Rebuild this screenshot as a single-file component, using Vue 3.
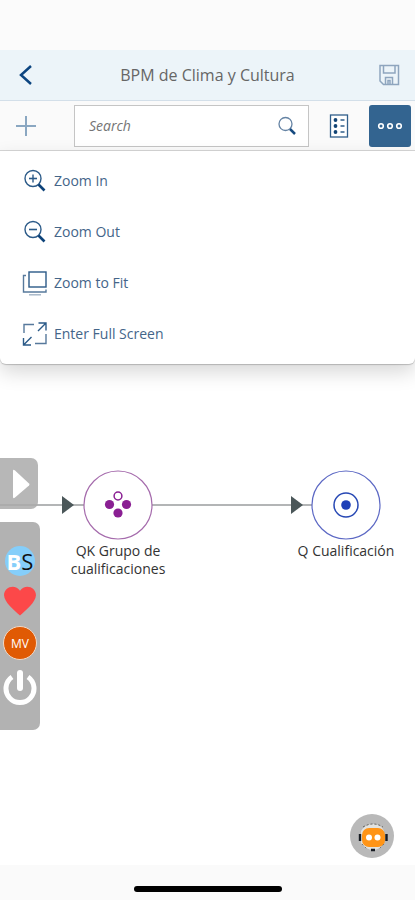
<script setup>
import { ref } from 'vue'

const query = ref('')
const actions = [
  { id: 'in', label: 'Zoom In' },
  { id: 'out', label: 'Zoom Out' },
  { id: 'fit', label: 'Zoom to Fit' },
  { id: 'full', label: 'Enter Full Screen' },
]
</script>

<template>
  <div class="screen">
    <div class="status"></div>
    <header class="titlebar">
      <button class="icon-btn" aria-label="Back">
        <svg width="24" height="24" viewBox="0 0 24 24"><path d="M17 3 7 12l10 9" fill="none" stroke="#0c4580" stroke-width="2.5" /></svg>
      </button>
      <h1>BPM de Clima y Cultura</h1>
      <button class="icon-btn" aria-label="Save">
        <svg width="24" height="24" viewBox="0 0 24 24" fill="none" stroke="#8ea5be" stroke-width="1.5"><path d="M3 2.500h18.500v19H6.500L3 18zM6.500 2.500v7.500h11.500V2.500M8.500 21.500v-7h7v7M11 21v-3.500h2V21" /></svg>
      </button>
    </header>
    <div class="toolbar">
      <button class="icon-btn" aria-label="Add">
        <svg width="24" height="24" viewBox="0 0 24 24"><path d="M12 2v20M2 12h20" stroke="#8aa7c1" stroke-width="2" /></svg>
      </button>
      <div class="search">
        <input v-model="query" type="text" placeholder="Search" aria-label="Search" />
        <button class="find" aria-label="Find">
          <svg width="20" height="20" viewBox="0 0 20 20" fill="none"><circle cx="8.500" cy="8" r="6.500" stroke="#6583a4" stroke-width="1.300" /><path d="m13 13 5 5" stroke="#174b80" stroke-width="2.500" /></svg>
        </button>
      </div>
      <button class="icon-btn" aria-label="Legend">
        <svg width="20" height="26" viewBox="0 0 20 26"><rect x="1.500" y="2" width="17" height="22" fill="#fff" stroke="#315f8b" stroke-width="1.300" /><g fill="#124475"><circle cx="6.500" cy="7" r="1.900" /><circle cx="6.500" cy="13" r="1.900" /><circle cx="6.500" cy="19" r="1.900" /></g><path d="M11.500 7h4M11.500 13h4M11.500 19h4" stroke="#315f8b" stroke-width="1.500" /></svg>
      </button>
      <button class="more" aria-label="More" aria-expanded="true">
        <svg width="26" height="10" viewBox="0 0 26 10" fill="none" stroke="#fff" stroke-width="1.600"><circle cx="4" cy="5" r="2.300" /><circle cx="13" cy="5" r="2.300" /><circle cx="22" cy="5" r="2.300" /></svg>
      </button>
    </div>

    <main class="canvas">
      <ul class="menu">
        <li v-for="a in actions" :key="a.id">
          <button class="action">
            <svg width="26" height="26" viewBox="0 0 26 26" fill="none" stroke="#2b5a88" stroke-width="1.400">
              <template v-if="a.id === 'in' || a.id === 'out'">
                <circle cx="11" cy="10.500" r="8" />
                <path d="M7 10.500h8" stroke-width="1.600" />
                <path v-if="a.id === 'in'" d="M11 6.500v8" />
                <path d="m16.500 16.500 6 6" stroke="#0d4279" stroke-width="2.600" />
              </template>
              <template v-else-if="a.id === 'fit'">
                <rect x="7" y="2" width="17" height="15" />
                <path d="M4 5.500H1.500V22H24v-2.500" stroke="#57799c" />
                <path d="M7 24.800h12" stroke="#a3b4c6" />
              </template>
              <template v-else>
                <path d="M2 12V3.500h10M24 13v9.500H13" stroke="#57799c" />
                <path d="m16 10 8-8M16.500 2H24v7.500M9.500 16l-8 8M1.500 17v7H9" />
              </template>
            </svg>
            <span>{{ a.label }}</span>
          </button>
        </li>
      </ul>

      <div class="edge incoming"></div>
      <div class="edge link"></div>

      <div class="node group">
        <svg width="70" height="70" viewBox="0 0 70 70">
          <circle cx="35" cy="35" r="34" fill="#fff" stroke="#a56bac" stroke-width="1.200" />
          <g fill="#8a1f93"><circle cx="26.500" cy="34.500" r="4.600" /><circle cx="43.500" cy="34.500" r="4.600" /><circle cx="35" cy="43" r="4.600" /></g>
          <circle cx="35" cy="26" r="3.900" fill="#fff" stroke="#8a1f93" stroke-width="1.500" />
        </svg>
        <span>QK Grupo de cualificaciones</span>
      </div>
      <div class="node single">
        <svg width="70" height="70" viewBox="0 0 70 70">
          <circle cx="35" cy="35" r="34" fill="#fff" stroke="#5c68c4" stroke-width="1.200" />
          <circle cx="35" cy="35" r="12" fill="none" stroke="#2748b4" stroke-width="1.500" />
          <circle cx="35" cy="35" r="4.800" fill="#1e40b8" />
        </svg>
        <span>Q Cualificación</span>
      </div>

      <button class="play" aria-label="Play">
        <svg width="20" height="32" viewBox="0 0 20 32"><path d="M2 3v26q0 2 2 .5L18 17.500q1-1 0-2L4 2.500Q2 1 2 3z" fill="#fff" /></svg>
      </button>
      <nav class="dock" aria-label="Shortcuts">
        <button class="bs"><b>B</b><i>S</i></button>
        <button aria-label="Favorite">
          <svg width="34" height="30" viewBox="0 0 34 31"><path d="M17 30.500C10 24 1 17 .500 9.500.500 1 12-2.500 17 5 22-2.500 33.500 1 33.500 9.500 33 17 24 24 17 30.500z" fill="#fc4849" /></svg>
        </button>
        <button class="mv">MV</button>
        <button class="power" aria-label="Power">
          <svg width="34" height="36" viewBox="0 0 34 36" fill="none" stroke="#fff" stroke-width="5"><path d="M9 7A14 14 0 1 0 25 7" /><path d="M17 3v15" stroke-width="6" stroke-linecap="round" /></svg>
        </button>
      </nav>

      <button class="bot" aria-label="Assistant">
        <svg width="44" height="44" viewBox="0 0 44 44">
          <circle cx="22" cy="22" r="22" fill="#b9b9b9" />
          <path d="M11 17q4-7 12-7t11 7v12q-4 7-11 7t-12-7z" fill="#e2e2df" />
          <path d="M13 13q10-6 20 0" fill="none" stroke="#5b5b57" stroke-dasharray="2 2" />
          <rect x="12" y="14" width="23" height="19" rx="7" fill="#ff9416" />
          <circle cx="19" cy="23.500" r="3" fill="#fff" /><circle cx="27.500" cy="23.500" r="3" fill="#fff" />
          <path d="M10 20v7M36.500 20v7M21 36h4" stroke="#161b22" stroke-width="2.400" />
          <path d="m12 30 5 5M34 30l-5 5" stroke="#777" stroke-dasharray="2 2" />
        </svg>
      </button>
    </main>
    <footer class="home"><div class="pill"></div></footer>
  </div>
</template>

<style>
body { margin: 0; background: #fff; }
</style>

<style scoped>
.screen {
  min-height: 100vh;
  display: flex;
  flex-direction: column;
  overflow: hidden;
  font-family: "Open Sans", "Noto Sans", sans-serif;
  color: #333;
}
button {
  border: 0;
  padding: 0;
  background: none;
  font: inherit;
  cursor: pointer;
}
svg { display: block; flex: none; }
.status { height: 50px; background: #fbfbfb; }
.titlebar, .toolbar {
  display: flex;
  align-items: center;
  box-sizing: border-box;
}
.titlebar {
  height: 51px;
  justify-content: space-between;
  background: #ecf4f9;
  border-bottom: 1px solid #d3dfe9;
}
h1 {
  margin: 0;
  font-size: 16px;
  font-weight: 400;
  color: #666;
}
.icon-btn {
  width: 52px;
  height: 44px;
  display: grid;
  place-items: center;
  flex: none;
}
.toolbar {
  height: 50px;
  padding-right: 4px;
  background: #fafafa;
  border-bottom: 1px solid #d6d6d6;
}
.search {
  flex: 1;
  min-width: 0;
  height: 42px;
  margin-left: 22px;
  margin-right: 4px;
  box-sizing: border-box;
  display: flex;
  align-items: center;
  border: 1px solid #c5c5c5;
  background: #fff;
}
.search input {
  flex: 1;
  min-width: 0;
  border: 0;
  outline: 0;
  padding: 0 14px;
  background: none;
  font: 14px "Open Sans", "Noto Sans", sans-serif;
  color: #333;
}
.search input::placeholder { color: #747474; font-style: italic; opacity: 1; }
.find { padding: 0 11px; }
.more {
  width: 42px;
  height: 42px;
  margin-left: 4px;
  display: grid;
  place-items: center;
  flex: none;
  border-radius: 3px;
  background: #336490;
}
.canvas { position: relative; flex: 1; min-height: 660px; background: #fff; }
.menu {
  position: absolute;
  top: 0;
  left: 0;
  right: 0;
  margin: 0;
  padding: 4px 0 5px;
  list-style: none;
  background: #fff;
  border-radius: 0 0 6px 6px;
  box-shadow: 0 1px 1px rgba(0, 0, 0, 0.2), 0 8px 20px rgba(0, 0, 0, 0.16);
}
.action {
  width: 100%;
  height: 51px;
  padding: 0 22px;
  display: flex;
  align-items: center;
  gap: 6px;
  font-size: 14px;
  color: #446589;
}
.edge {
  position: absolute;
  top: 353px;
  height: 2px;
  background: #b3b5b6;
}
.edge::after {
  content: "";
  position: absolute;
  right: 10px;
  top: -8px;
  border: solid transparent;
  border-width: 9px 0 9px 12px;
  border-left-color: #4b5759;
}
.incoming { left: 0; width: 84px; }
.link { left: 152px; width: 161px; }
.node {
  position: absolute;
  top: 319px;
  width: 120px;
  display: flex;
  flex-direction: column;
  align-items: center;
  gap: 2px;
  font-size: 14px;
  line-height: 18px;
  text-align: center;
}
.group { left: 58px; }
.single { left: 286px; }
.play {
  position: absolute;
  top: 307px;
  left: 0;
  width: 38px;
  height: 51px;
  padding-left: 11px;
  border-radius: 0 7px 7px 0;
  background: rgba(170, 170, 170, 0.85);
}
.dock {
  position: absolute;
  top: 371px;
  left: 0;
  width: 40px;
  height: 208px;
  box-sizing: border-box;
  padding-top: 24px;
  display: flex;
  flex-direction: column;
  align-items: center;
  gap: 10px;
  border-radius: 0 7px 7px 0;
  background: #b2b2b2;
}
.bs {
  width: 30px;
  height: 30px;
  border-radius: 50%;
  background: #85cefa;
  font: 22px/30px "Open Sans", sans-serif;
  display: flex;
  justify-content: center;
}
.bs b { color: #fff; }
.bs i { color: #111; font-style: normal; }
.mv {
  width: 34px;
  height: 34px;
  border: 1px solid #f1d9c8;
  border-radius: 50%;
  background: #e05a04;
  color: #fff;
  font-size: 12px;
}
.bot {
  position: absolute;
  right: 21px;
  bottom: 7px;
  border-radius: 50%;
}
.home {
  height: 35px;
  display: flex;
  justify-content: center;
  align-items: center;
  box-sizing: border-box;
  padding-top: 12px;
  background: #fafafa;
}
.pill { width: 148px; height: 6px; border-radius: 3px; background: #000; }
</style>
